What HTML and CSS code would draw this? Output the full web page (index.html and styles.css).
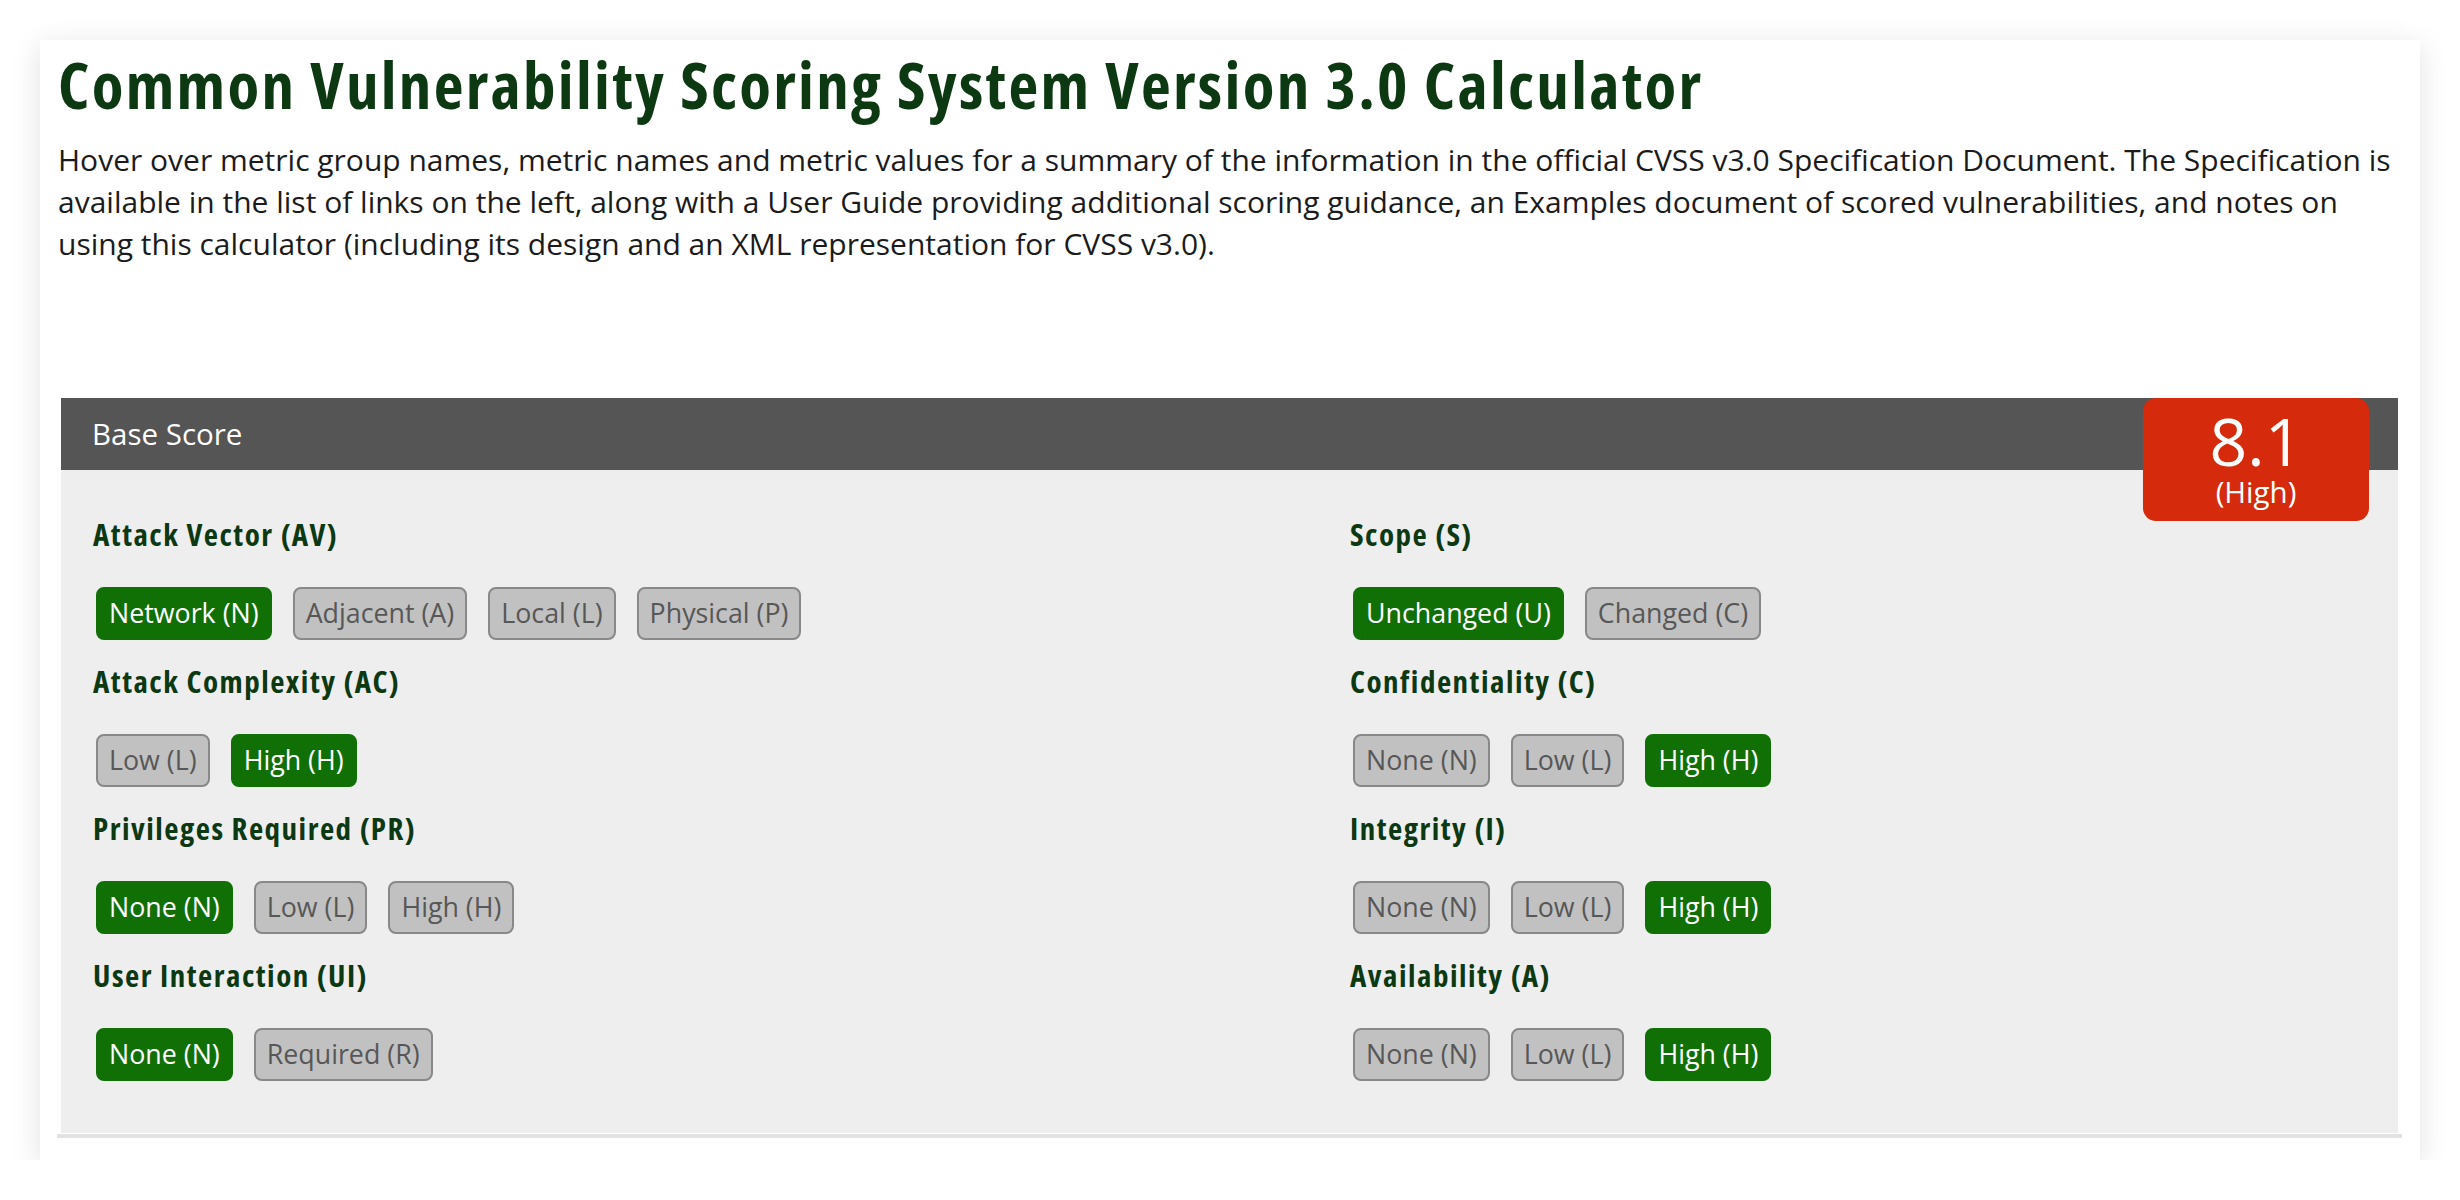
FILE: index.html
```html
<!DOCTYPE html>
<html lang="en">
<head>
<meta charset="utf-8">
<title>CVSS v3.0 Calculator</title>
<link rel="stylesheet" href="styles.css">
</head>
<body>
<div class="card">
  <h1 class="title">Common Vulnerability Scoring System Version 3.0 Calculator</h1>
  <p class="intro">Hover over metric group names, metric names and metric values for a summary of the information in the official CVSS v3.0 Specification Document. The Specification is available in the list of links on the left, along with a User Guide providing additional scoring guidance, an Examples document of scored vulnerabilities, and notes on using this calculator (including its design and an XML representation for CVSS v3.0).</p>
  <div class="spacer"></div>
  <section class="panel">
    <div class="panel-head">
      <span class="panel-title">Base Score</span>
      <div class="score">
        <div class="score-num">8.1</div>
        <div class="score-sev">(High)</div>
      </div>
    </div>
    <div class="panel-body">
      <div class="col">
        <div class="metric">
          <h3 class="metric-name">Attack Vector (AV)</h3>
          <div class="opts">
            <span class="opt on">Network (N)</span>
            <span class="opt">Adjacent (A)</span>
            <span class="opt">Local (L)</span>
            <span class="opt">Physical (P)</span>
          </div>
        </div>
        <div class="metric">
          <h3 class="metric-name">Attack Complexity (AC)</h3>
          <div class="opts">
            <span class="opt">Low (L)</span>
            <span class="opt on">High (H)</span>
          </div>
        </div>
        <div class="metric">
          <h3 class="metric-name">Privileges Required (PR)</h3>
          <div class="opts">
            <span class="opt on">None (N)</span>
            <span class="opt">Low (L)</span>
            <span class="opt">High (H)</span>
          </div>
        </div>
        <div class="metric">
          <h3 class="metric-name">User Interaction (UI)</h3>
          <div class="opts">
            <span class="opt on">None (N)</span>
            <span class="opt">Required (R)</span>
          </div>
        </div>
      </div>
      <div class="col">
        <div class="metric">
          <h3 class="metric-name">Scope (S)</h3>
          <div class="opts">
            <span class="opt on">Unchanged (U)</span>
            <span class="opt">Changed (C)</span>
          </div>
        </div>
        <div class="metric">
          <h3 class="metric-name">Confidentiality (C)</h3>
          <div class="opts">
            <span class="opt">None (N)</span>
            <span class="opt">Low (L)</span>
            <span class="opt on">High (H)</span>
          </div>
        </div>
        <div class="metric">
          <h3 class="metric-name">Integrity (I)</h3>
          <div class="opts">
            <span class="opt">None (N)</span>
            <span class="opt">Low (L)</span>
            <span class="opt on">High (H)</span>
          </div>
        </div>
        <div class="metric">
          <h3 class="metric-name">Availability (A)</h3>
          <div class="opts">
            <span class="opt">None (N)</span>
            <span class="opt">Low (L)</span>
            <span class="opt on">High (H)</span>
          </div>
        </div>
      </div>
    </div>
  </section>
  <div class="rule"></div>
</div>
</body>
</html>
```
FILE: styles.css
```css
* { box-sizing: border-box; }
html, body { margin: 0; padding: 0; background: #fff; }
body {
  font-family: "Open Sans", "Noto Sans", sans-serif;
  color: #1b1b1b;
  padding: 40px 0 0 40px;
}
.card {
  width: 2380px;
  height: 1120px;
  background: #fff;
  box-shadow: 0 6px 28px rgba(0, 0, 0, 0.12);
  padding: 9px 18px 0 18px;
}
.title {
  margin: 0;
  font-family: "Open Sans", sans-serif;
  font-weight: 700;
  font-stretch: 75%;
  font-size: 65px;
  letter-spacing: 2.3px;
  line-height: 70px;
  color: #0c3812;
}
.intro {
  margin: 19.5px 0 0 0;
  font-size: 30px;
  line-height: 42px;
}
.spacer { height: 133px; }
.panel {
  margin: 0 4px 0 3px;
  background: #eeeeee;
}
.panel-head {
  position: relative;
  height: 72px;
  background: #555555;
  display: flex;
  align-items: center;
  padding-left: 31px;
}
.panel-title {
  color: #fff;
  font-size: 29.5px;
  line-height: 42px;
}
.score {
  position: absolute;
  top: 0;
  right: 29px;
  width: 226px;
  height: 123px;
  background: #d52b0c;
  border-radius: 13px;
  color: #fff;
  text-align: center;
  padding-top: 9px;
}
.score-num {
  font-size: 66px;
  line-height: 67px;
}
.score-sev {
  margin-top: 4px;
  font-size: 29.5px;
  line-height: 28px;
}
.panel-body {
  display: grid;
  grid-template-columns: 1257px 1fr;
  padding: 46px 0 52px 32px;
}
.metric + .metric { margin-top: 23px; }
.metric-name {
  margin: 0;
  font-family: "Open Sans", sans-serif;
  font-weight: 700;
  font-stretch: 75%;
  font-size: 31px;
  letter-spacing: 1.5px;
  line-height: 36px;
  color: #0c3812;
}
.opts {
  display: flex;
  gap: 21px;
  margin-top: 35px;
  padding-left: 3px;
}
.opt {
  display: inline-block;
  font-size: 26.8px;
  line-height: 42px;
  padding: 3.5px 11px;
  border: 2px solid #888;
  border-radius: 8px;
  background: #c1c1c1;
  color: #575757;
}
.opt.on {
  background: #107006;
  border-color: #107006;
  color: #fff;
}
.rule {
  margin: 1.5px 0 0 -1px;
  height: 3.5px;
  background: #e2e2e2;
}
```
